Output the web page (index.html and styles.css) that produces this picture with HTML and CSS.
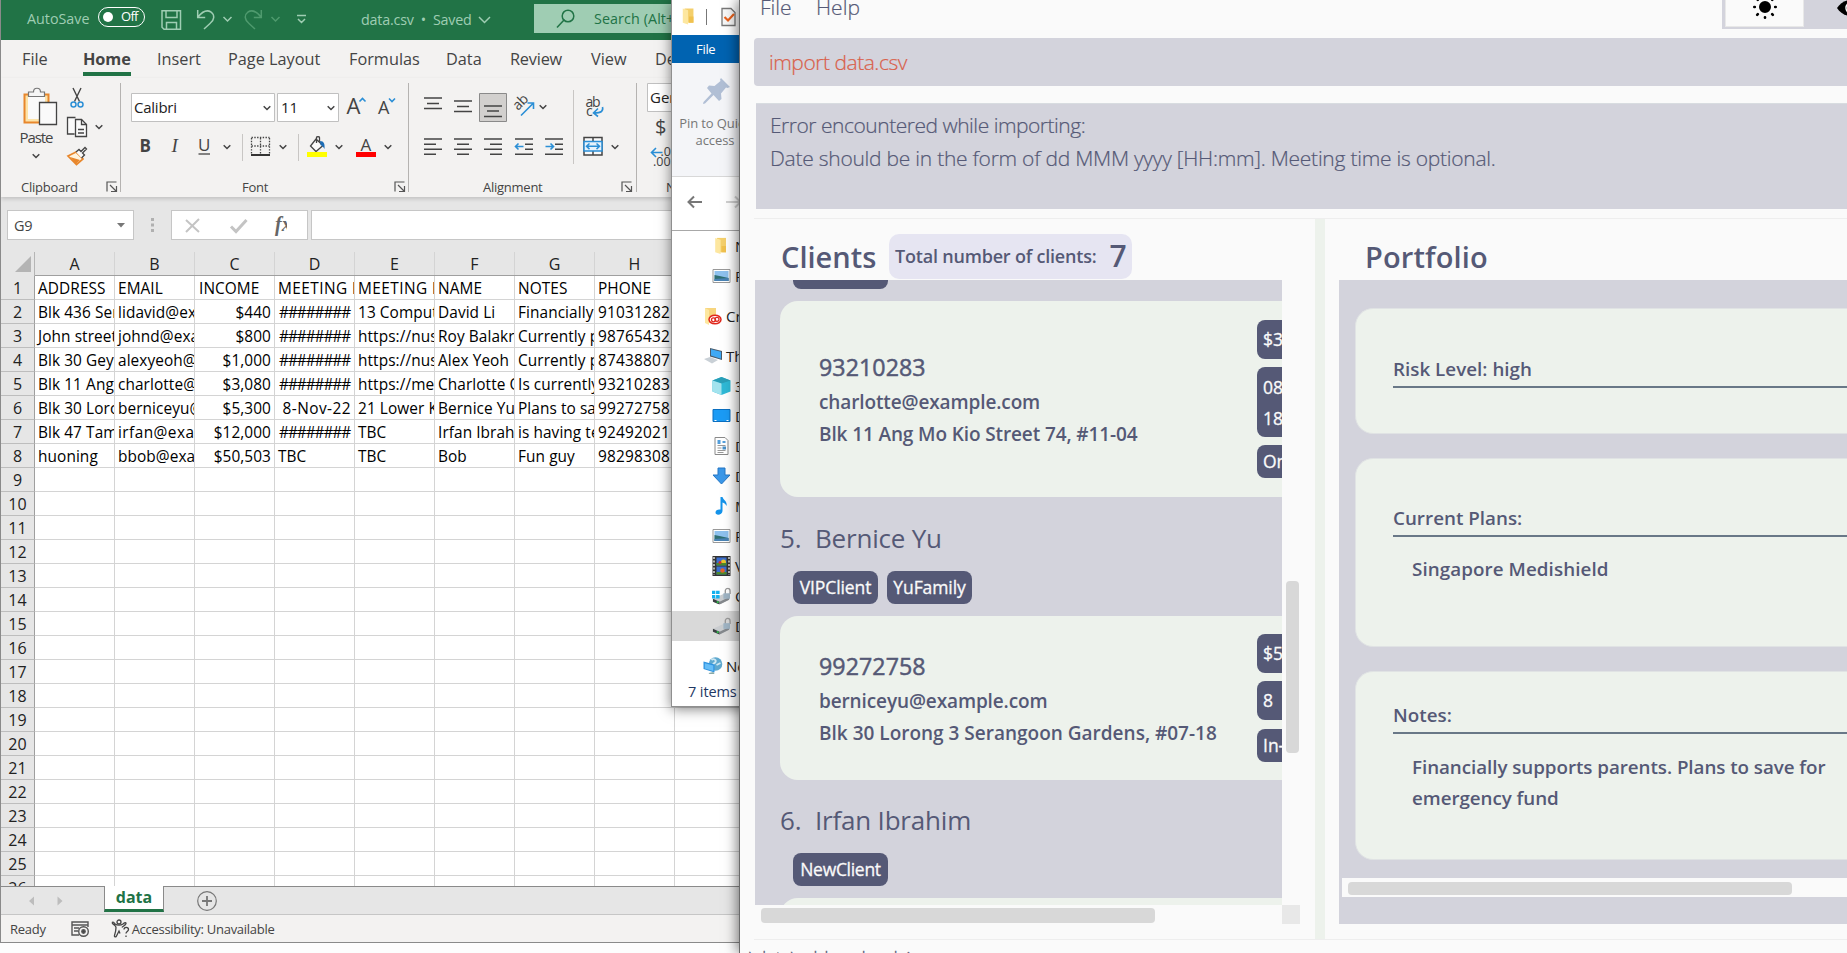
FILE: index.html
```
<!DOCTYPE html>
<html lang="en">
<head>
<meta charset="utf-8">
<title>Desktop</title>
<link rel="stylesheet" href="styles.css">
</head>
<body>
<svg width="0" height="0" class="defs">
  <symbol id="chev" viewBox="0 0 8 6" overflow="visible"><path d="M.7 1.2L4 4.5 7.3 1.2" fill="none" stroke="currentColor" stroke-width="1.5"/></symbol>
  <symbol id="launch" viewBox="0 0 12 12"><path d="M1 10.500V1h9.500M4 4l6 6M10.500 5v5.500H5" fill="none" stroke="#555" stroke-width="1.200"/></symbol>
  <symbol id="folder" viewBox="0 0 18 20"><path d="M4 1h10v16H4z" fill="#f4cf6b"/><path d="M2 1l6 2v16l-6-2z" fill="#fde7a0"/><path d="M9 10h5v7H9z" fill="#f0c14e"/></symbol>
  <symbol id="photo" viewBox="0 0 18 14"><path d="M.5.500h17v13H.5z" fill="#fff" stroke="#999"/><path d="M2 2h14v10H2z" fill="#8ec1ee"/><path d="M2 6l5 1 9 2v3H2z" fill="#2f6f72"/><path d="M2 10l14-1v3H2z" fill="#4a83b5"/></symbol>
  <symbol id="drive" viewBox="0 0 20 18"><path d="M1 12l11-5 6 3v3l-10 5-7-3z" fill="#c9cccf"/><path d="M1 12l7 3v3l-7-3z" fill="#3b3f42"/><path d="M8 15l10-5v3L8 18z" fill="#85898d"/><rect x="5" y="14.500" width="2" height="2" fill="#2fc24b"/><path d="M14 7V3.500a2.500 2.500 0 0 1 5 0V7" fill="none" stroke="#999" stroke-width="1.400"/><path d="M12 6h7v6h-7z" fill="#9fb4c4"/></symbol>
</svg>
<main class="desktop">

<section class="excel">
  <header class="xl-title">
    <span class="autosave">AutoSave</span>
    <span class="toggle"><i></i>Off</span>
    <svg class="quick" width="150" height="40" viewBox="158 0 150 40" fill="none" stroke="#9fcdb3" stroke-width="1.500">
      <path d="M162 10.700h18.500v18.600H164l-2-2zM166 11v6.500h11V11M166.500 29v-6.500h10V29"/>
      <path d="M197.700 10v7.500h7.500M198 17c4-5 9-7.500 13-5 4 3 3.500 8-1 11.500l-6 5.500"/>
      <g stroke="#4f9a6e"><path d="M261.300 10v7.500h-7.500M261 17c-4-5-9-7.500-13-5-4 3-3.500 8 1 11.500l6 5.500"/><path d="M271.500 17l4 4 4-4"/></g>
      <path d="M223.500 17l4 4 4-4M297 15.500h9M298 19l3.500 3.500L305 19"/>
    </svg>
    <span class="doc">data.csv&nbsp; •&nbsp; Saved</span>
    <svg width="14" height="10" viewBox="0 0 14 10"><path d="M1 2l5.500 5.500L12 2" fill="none" stroke="#9fcdb3" stroke-width="1.500"/></svg>
    <div class="xl-search">
      <svg width="20" height="20" viewBox="0 0 20 20"><path d="M1 18.500l7.500-8" stroke="#217346" stroke-width="1.500"/><circle cx="12" cy="7" r="5.800" fill="none" stroke="#217346" stroke-width="1.500"/></svg>
      <span>Search (Alt+Q)</span>
    </div>
  </header>

  <nav class="xl-tabs">
    <span class="t1">File</span><span class="t2 on">Home</span><span class="t3">Insert</span><span class="t4">Page Layout</span><span class="t5">Formulas</span><span class="t6">Data</span><span class="t7">Review</span><span class="t8">View</span><span class="t9">Developer</span>
  </nav>

  <div class="ribbon">
    <div class="group g-clip">
      <svg width="120" height="96" viewBox="1 80 120 96" fill="none">
        <path d="M24.500 94.500h24v28h-24z" fill="#fde3a8" stroke="#e8872c" stroke-width="2"/><path d="M28 97h17v22H28z" fill="#fafafa"/>
        <path d="M28.500 96.500v-4.500h5c0-5 7-5 7 0h4v4.500z" fill="#f6f6f6" stroke="#777" stroke-width="1.200"/>
        <path d="M39.500 102.500h17v22h-17z" fill="#fafafa" stroke="#444" stroke-width="1.300"/>
        <text x="19.500" y="143" textLength="34">Paste</text>
        <use href="#chev" x="32" y="153" width="8" height="6"/>
        <path d="M73 88l6.500 13.500M81 88l-6.500 13.500" stroke="#444" stroke-width="1.400"/><g stroke="#2b8fd6" stroke-width="1.500"><circle cx="73.500" cy="104.500" r="2.500"/><circle cx="80.500" cy="104.500" r="2.500"/></g>
        <g stroke="#444" stroke-width="1.300"><path d="M74.500 134h-7v-16.500h8M75.500 119.500h6l5 5v12h-11z" fill="#fafafa"/><path d="M81.500 119.500v5h5M78 129.500h6M78 133h6"/></g>
        <use href="#chev" x="95" y="124" width="8" height="6"/>
        <path d="M68 156l8-4 7 7-6.500 5.500z" fill="#fff3dd" stroke="#e8872c" stroke-width="1.700"/><path d="M70 157l10 3-4 4z" fill="#e8872c"/><path d="M76 152l3-2.500 2 2 4-4 1.500 1.500-4 4 2 2-3 3" fill="#fafafa" stroke="#444" stroke-width="1.300"/>
      </svg>
      <footer>Clipboard<svg width="12" height="12"><use href="#launch"/></svg></footer>
    </div>
    <div class="group g-font">
      <svg width="287" height="96" viewBox="121 80 287 96" fill="none">
        <path d="M131.500 93.500h143v28h-143zM277.500 93.500h61v28h-61z" fill="#fff" stroke="#c0c0c0"/>
        <text x="134" y="113" textLength="43" class="dark">Calibri</text><text x="281" y="113" class="dark">11</text>
        <use href="#chev" x="263" y="105" width="8" height="6"/><use href="#chev" x="327" y="105" width="8" height="6"/>
        <text x="346.500" y="113.500" font-size="22">A</text><path d="M359.500 101.500l3-3 3 3" stroke="#2b8fd6" stroke-width="1.600"/>
        <text x="378" y="113.500" font-size="18">A</text><path d="M389 98.500l3 3 3-3" stroke="#2b8fd6" stroke-width="1.600"/>
        <text x="139.500" y="152" font-size="17" font-weight="700">B</text>
        <text x="171.500" y="152" class="serif">I</text>
        <text x="198" y="151" font-size="17">U</text><path d="M198.500 154h11.500" stroke="#444" stroke-width="1.300"/>
        <use href="#chev" x="223" y="144" width="8" height="6"/>
        <path d="M242.500 134v27M298.500 134v27" stroke="#c8c6c4"/>
        <path d="M251.500 137.500h18M251.500 146h18M251.500 138v16M260.500 138v16M269.500 138v16" stroke="#444" stroke-width="1.300" stroke-dasharray="1.400 1.400"/><path d="M251 155h19" stroke="#333" stroke-width="2"/>
        <use href="#chev" x="279" y="144" width="8" height="6"/>
        <path d="M316 139l7 6.500-7 6-5.500-5.500zM316.500 143v-5.500c0-1 3-1 3 0v4" fill="#fafafa" stroke="#444" stroke-width="1.300"/><path d="M320 141c4 0 5 3 4.500 8-1-2-2-3-4-4z" fill="#1b6cb5"/>
        <path d="M307 152h20v5h-20z" fill="#ff0"/><use href="#chev" x="335" y="144" width="8" height="6"/>
        <text x="360.500" y="151" font-size="17">A</text><path d="M356 152h20v5h-20z" fill="red"/><use href="#chev" x="384" y="144" width="8" height="6"/>
      </svg>
      <footer>Font<svg width="12" height="12"><use href="#launch"/></svg></footer>
    </div>
    <div class="group g-align">
      <svg width="228" height="96" viewBox="409 80 228 96" fill="none">
        <path d="M479.500 93.500h27v28h-27z" fill="#d2d0ce" stroke="#8a8a8a"/>
        <g stroke="#444" stroke-width="1.400">
          <path d="M424 98h18M427 103.500h12M424 108.500h18M454 101h18M457 106.500h12M454 111.500h18M484 106h18M487 111h12M484 116.500h18"/>
          <path d="M424 139h18M424 144.300h12M424 149.300h18M424 154.300h12M454 139h18M457 144.300h12M454 149.300h18M457 154.300h12M484 139h18M490 144.300h12M484 149.300h18M490 154.300h12"/>
          <path d="M515 139h18M525 144.300h8M525 149.300h8M515 154.300h18M545 139h18M555 144.300h8M555 149.300h8M545 154.300h18"/>
        </g>
        <text transform="translate(518 111) rotate(-45)" font-size="14" textLength="16">ab</text>
        <path d="M521 115.500l12.500-12.500M527.500 103h6v6" stroke="#2b8fd6" stroke-width="1.600"/>
        <use href="#chev" x="539" y="104" width="8" height="6"/>
        <path d="M573.500 90v74" stroke="#c8c6c4"/>
        <text x="585.500" y="107" font-size="14" textLength="15">ab</text><text x="586" y="116" font-size="14">c</text>
        <path d="M602.500 107c1 4-1 6-8.500 6M598 108.500l-4.500 4.500 4.500 3.500" stroke="#2b8fd6" stroke-width="1.600"/>
        <g stroke="#2b8fd6" stroke-width="1.600"><path d="M515.500 146.500h8M518.500 143.500l-3 3 3 3M545.500 146.500h8M550.500 143.500l3 3-3 3"/></g>
        <path d="M584 137.500h18v17.500h-18zM593 138v17" stroke="#444" stroke-width="1.500" fill="#fafafa"/><path d="M584 141.500h18v9.500h-18z" fill="#e6f2fb" stroke="#2b8fd6" stroke-width="1.500"/><path d="M587 146.300h12M589.500 143.500l-3 2.800 3 2.800M596.500 143.500l3 2.800-3 2.800" stroke="#2b8fd6" stroke-width="1.500"/>
        <use href="#chev" x="611" y="144" width="8" height="6"/>
      </svg>
      <footer>Alignment<svg width="12" height="12"><use href="#launch"/></svg></footer>
    </div>
    <div class="group g-num">
      <svg width="103" height="96" viewBox="637 80 103 96" fill="none">
        <path d="M647.500 83.500h90v28h-90z" fill="#fff" stroke="#c0c0c0"/><text x="650" y="103" class="dark">General</text>
        <text x="655" y="134" font-size="20">$</text>
        <path d="M651.500 152.500h11M656 148l-4.500 4.500 4.500 4.500" stroke="#2b8fd6" stroke-width="1.600"/>
        <text x="660.500" y="156" font-size="12.500">.0</text><text x="653" y="166" font-size="12.500">.00</text>
      </svg>
      <footer>Number</footer>
    </div>
  </div>

  <div class="fbar">
    <div class="namebox"><span>G9</span><svg width="8" height="5"><path d="M0 0h8L4 4.500z" fill="#777"/></svg></div>
    <svg class="dots" width="4" height="14"><path d="M0 0h3v3H0zM0 5.500h3v3H0zM0 11h3v3H0z" fill="#b0b0b0"/></svg>
    <div class="fx"><svg width="110" height="26" viewBox="0 0 110 26" fill="none"><path d="M9 8l13 12M22 7L9 20" stroke="#c4c4c4" stroke-width="2"/><path d="M54 14.500l5 5L69.500 8" stroke="#c4c4c4" stroke-width="3"/><text x="98" y="19" class="fxt">fx</text></svg></div>
    <div class="formula"></div>
  </div>

  <div class="sheet">
    <div class="row heads"><b><svg width="16" height="16"><path d="M16 0v16H0z" fill="#b4b4b4"/></svg></b><span>A</span><span>B</span><span>C</span><span>D</span><span>E</span><span>F</span><span>G</span><span>H</span><span></span></div>
    <div class="row"><b>1</b><span>ADDRESS</span><span>EMAIL</span><span>INCOME</span><span class="m">MEETING DATE</span><span class="m">MEETING LOCATION</span><span>NAME</span><span>NOTES</span><span>PHONE</span></div>
    <div class="row"><b>2</b><span>Blk 436 Serangoon</span><span>lidavid@example</span><span class="r">$440</span><span class="h">########</span><span>13 Computing</span><span>David Li</span><span>Financially</span><span class="d">91031282</span></div>
    <div class="row"><b>3</b><span>John street</span><span>johnd@example</span><span class="r">$800</span><span class="h">########</span><span>https://nus</span><span>Roy Balakrishnan</span><span>Currently paying</span><span class="d">98765432</span></div>
    <div class="row"><b>4</b><span>Blk 30 Geylang</span><span>alexyeoh@example</span><span class="r">$1,000</span><span class="h">########</span><span>https://nus</span><span>Alex Yeoh</span><span>Currently paying</span><span class="d">87438807</span></div>
    <div class="row"><b>5</b><span>Blk 11 Ang Mo</span><span>charlotte@example</span><span class="r">$3,080</span><span class="h">########</span><span>https://meet</span><span>Charlotte Oliveiro</span><span>Is currently</span><span class="d">93210283</span></div>
    <div class="row"><b>6</b><span>Blk 30 Lorong</span><span>berniceyu@example</span><span class="r">$5,300</span><span class="r m">8-Nov-22</span><span>21 Lower Kent</span><span>Bernice Yu</span><span>Plans to save</span><span class="d">99272758</span></div>
    <div class="row"><b>7</b><span>Blk 47 Tampines</span><span class="m">irfan@example</span><span class="r">$12,000</span><span class="h">########</span><span>TBC</span><span>Irfan Ibrahim</span><span>is having tea</span><span class="d">92492021</span></div>
    <div class="row"><b>8</b><span>huoning</span><span>bbob@example</span><span class="r">$50,503</span><span>TBC</span><span>TBC</span><span>Bob</span><span>Fun guy</span><span class="d">98298308</span></div>
    <div class="row"><b>9</b></div><div class="row"><b>10</b></div><div class="row"><b>11</b></div><div class="row"><b>12</b></div><div class="row"><b>13</b></div><div class="row"><b>14</b></div><div class="row"><b>15</b></div><div class="row"><b>16</b></div><div class="row"><b>17</b></div><div class="row"><b>18</b></div><div class="row"><b>19</b></div><div class="row"><b>20</b></div><div class="row"><b>21</b></div><div class="row"><b>22</b></div><div class="row"><b>23</b></div><div class="row"><b>24</b></div><div class="row"><b>25</b></div><div class="row"><b>26</b></div>
  </div>

  <div class="sheettabs">
    <svg width="36" height="12"><path d="M6 1.500v9L1 6zM29.500 1.500v9l5-4.500z" fill="#bdbdbd"/></svg>
    <span class="stab">data</span>
    <svg class="plus" width="20" height="20" viewBox="0 0 20 20" fill="none" stroke="#777"><circle cx="10" cy="10" r="9.300" stroke-width="1.200"/><path d="M10 5v10M5 10h10" stroke-width="1.800"/></svg>
  </div>
  <footer class="xl-status">
    <span>Ready</span>
    <svg class="macro" width="19" height="16" viewBox="0 0 19 16" fill="none" stroke="#555" stroke-width="1.400"><path d="M8 14H1V1h16v5M1 4h16M3 7h5M3 10h4"/><circle cx="12.500" cy="10.500" r="4.800" fill="#f3f2f1"/><circle cx="12.500" cy="10.500" r="1.700" fill="#444"/></svg>
    <svg class="acc" width="19" height="19" viewBox="0 0 19 19" fill="none" stroke="#444" stroke-width="1.300"><circle cx="8" cy="3" r="2"/><path d="M1 3.500c1-1 2 0 3 1.500 2 1.500 6 1.500 8 0 1.500-1.500 3-2 3-.5-.5 2-3.500 3-4 4M1 3.500C2 6 5 6.500 5 8.500S4 15 3.500 16.500s1.500 2 2 .5L8 12l1 2.500M13 10.500c0-3 4.500-2.500 4.500 0 0 2-2.500 2-2.500 4M15 16.500v1.500"/></svg>
    <span class="acct">Accessibility: Unavailable</span>
  </footer>
</section>

<section class="explorer">
  <div class="ex-title">
    <svg width="70" height="35" viewBox="0 0 70 35"><use href="#folder" x="9" y="7" width="16" height="19"/><path d="M34.500 9v16" stroke="#777"/><path d="M50 8.500h9l4 4v13H50z" fill="#f8f8f8" stroke="#777" stroke-width="1.300"/><path d="M52.500 17l3.500 3.500L62 14" fill="none" stroke="#e8601c" stroke-width="2.200"/></svg>
  </div>
  <div class="ex-file">File</div>
  <div class="ex-ribbon">
    <svg width="28" height="27" viewBox="0 0 28 27"><path d="M18 0l9 9-2.500 1-1.500-.5-5 6 .5 5.500-2.500 2-5.500-6L2 25.500l-2 .5.500-2 8-8.500L4 10l2-2.500 5.500.5 6-5-.5-1.500z" fill="#b1bfd5"/></svg>
    <p>Pin to Quick<br>access</p>
  </div>
  <div class="ex-nav"><svg width="60" height="14" viewBox="0 0 60 14" fill="none" stroke-width="2"><path d="M16 7H2.500M8 1.500L2.500 7 8 12.500" stroke="#777"/><path d="M40 7h14M49 1.500L54.500 7 49 12.500" stroke="#d0d0d0"/></svg></div>
  <ul class="tree">
    <li class="sub"><svg width="18" height="18"><use href="#folder"/></svg>New</li>
    <li class="sub"><svg width="18" height="14"><use href="#photo"/></svg>Pictures</li>
    <li class="top"><svg width="18" height="18" viewBox="0 0 18 18"><path d="M1 1h11v15H1z" fill="#f7d57e"/><path d="M1 1l4 2v15l-4-2z" fill="#fde7a0"/><ellipse cx="11" cy="12.500" rx="6" ry="4.300" fill="#fff" stroke="#e0271c" stroke-width="1.500"/><circle cx="9.500" cy="12.800" r="2" fill="none" stroke="#e0271c" stroke-width="1.300"/><circle cx="13" cy="12.300" r="2" fill="none" stroke="#e0271c" stroke-width="1.300"/></svg>Creative</li>
    <li class="top"><svg width="20" height="18" viewBox="0 0 20 18"><path d="M7 1l12 3v9L7 9.500z" fill="#4a5b6b"/><path d="M8 2.300l10 2.500v7L8 8.500z" fill="#3fa9f5"/><path d="M1 12l6-2 8 3-6 3.500z" fill="#c9d0d6"/></svg>This PC</li>
    <li class="sub"><svg width="18" height="18" viewBox="0 0 18 18"><path d="M9 0l9 3.500v11L9 18 0 14.500v-11z" fill="#2fb9d6"/><path d="M9 0l9 3.500L9 6.500 0 3.500z" fill="#2a9fb8"/><path d="M0 3.500l9 3V18l-9-3.500z" fill="#a3e3ee"/></svg>3D Objects</li>
    <li class="sub"><svg width="18" height="14" viewBox="0 0 18 14"><path d="M.5.500h17v12H.5z" fill="#1b9bf5" stroke="#0b6fc0"/><path d="M2 11.500h2M14 11.500h2" stroke="#fff"/></svg>Desktop</li>
    <li class="sub"><svg width="18" height="18" viewBox="0 0 18 18"><path d="M2.500.500h10l3 3v14h-13z" fill="#fff" stroke="#8a8a8a"/><path d="M5 6h3M5 4h3M10 5h3" stroke="#1b7fd0" stroke-width="1.500"/><path d="M5 8.500h8M5 11h4M5 13.500h8M5 15.500h6" stroke="#999"/><path d="M10 9.500h3.500v3H10z" fill="#4a90c8"/></svg>Documents</li>
    <li class="sub"><svg width="18" height="18" viewBox="0 0 18 18"><path d="M5.500 1h7v7h5L9 17 .5 8h5z" fill="#3a97e8" stroke="#2476c4"/></svg>Downloads</li>
    <li class="sub"><svg width="18" height="18" viewBox="0 0 18 18"><path d="M8 0h2c1 3.500 5 4 4 9-.8-2-2-3-4-3.500V14c0 4-7 5-7 1.500 0-2.500 2.500-3.500 5-3z" fill="#1493ea"/></svg>Music</li>
    <li class="sub"><svg width="18" height="14"><use href="#photo"/></svg>Pictures</li>
    <li class="sub"><svg width="18" height="20" viewBox="0 0 18 20"><path d="M0 0h18v20H0z" fill="#333"/><path d="M1.500 1v18M16.500 1v18" stroke="#ddd" stroke-width="1.500" stroke-dasharray="2 1.500"/><path d="M4 1.500h10v8H4zM4 10.500h10v8H4z" fill="#3b6fd0"/><circle cx="11" cy="6" r="2.500" fill="#e8c62c"/><path d="M4 7h10v2.500H4zM4 16h10v2.500H4z" fill="#4d8b2a"/><circle cx="7.500" cy="6.500" r="1.500" fill="#d0342c"/><circle cx="10" cy="14.500" r="2.300" fill="#e0632c"/></svg>Videos</li>
    <li class="sub"><svg width="20" height="18" viewBox="0 0 20 18"><use href="#drive"/><path d="M0 3.500h3.500V7H0zM4.300 3.500H8V7H4.300zM0 8h3.500v3.500H0zM4.300 8H8v3.500H4.300z" fill="#12b0ee"/></svg>OS (C:)</li>
    <li class="sub sel"><svg width="20" height="18"><use href="#drive"/></svg>Data (D:)</li>
    <li class="top"><svg width="19" height="18" viewBox="0 0 19 18"><circle cx="12" cy="7" r="6.800" fill="#5fa9cf"/><path d="M8 3c2-2 5 0 4 2s-3 1-2 3M13 8l4-2" stroke="#cfe8f2" stroke-width="1.800" fill="none"/><path d="M0 4.500l11 3v8L0 12z" fill="#2f93e0"/><path d="M1.300 6.200l8.500 2.300V14l-8.500-2.600z" fill="#65bdf7"/><path d="M5 16l5-1 1 2H6z" fill="#8aa"/></svg>Network</li>
  </ul>
  <div class="ex-status">7 items</div>
</section>

<section class="app">
  <header class="menu">
    <span class="m1">File</span><span>Help</span>
    <div class="modes">
      <div class="mode lit"><svg width="26" height="26" viewBox="-13 -13 26 26" stroke="#000" stroke-width="2.600" stroke-linecap="round"><circle r="5" stroke-width="2"/><path d="M0-10.200v-.5M0 10.300v.5M-10.200 0h-.5M10.200 0h.5M-7.200-7.200l-.6-.6M7.200-7.200l.6-.6M-7.200 7.200l-.6.6M7.200 7.200l.6.6"/></svg></div>
      <div class="mode"><svg width="30" height="20" viewBox="0 0 30 20"><path d="M0 10C7-1 23-1 30 10 23 21 7 21 0 10z"/><circle cx="15" cy="10" r="6" fill="none" stroke="#fff" stroke-width="1.500"/></svg></div>
    </div>
  </header>
  <div class="command">import data.csv</div>
  <div class="result"><span class="l1">Error encountered while importing:</span><br>Date should be in the form of dd MMM yyyy [HH:mm]. Meeting time is optional.</div>
  <div class="split">
    <div class="clients">
      <div class="chead"><h2>Clients</h2><div class="total"><span>Total number of clients:</span><b>7</b></div></div>
      <div class="listwrap">
        <div class="list">
          <div class="tag stub"></div>
          <div class="card first">
            <div class="who"><strong>93210283</strong><span>charlotte@example.com</span><span>Blk 11 Ang Mo Kio Street 74, #11-04</span></div>
            <div class="badges"><i>$3,080</i><i class="two">08 Nov<br>18:00</i><i class="low">Online</i></div>
          </div>
          <h3><em>5.</em>Bernice Yu</h3>
          <div class="tags"><span class="tag">VIPClient</span><span class="tag">YuFamily</span></div>
          <div class="card second">
            <div class="who"><strong>99272758</strong><span>berniceyu@example.com</span><span class="wide">Blk 30 Lorong 3 Serangoon Gardens, #07-18</span></div>
            <div class="badges"><i>$5,300</i><i>8 &nbsp;Nov</i><i class="low">In-person</i></div>
          </div>
          <h3><em>6.</em>Irfan Ibrahim</h3>
          <div class="tags"><span class="tag w">NewClient</span></div>
          <div class="card third"></div>
        </div>
        <div class="vbar"><i></i></div>
      </div>
      <div class="hbar"><i></i><b></b></div>
    </div>
    <div class="divider"></div>
    <div class="portfolio">
      <h2>Portfolio</h2>
      <div class="panel">
        <div class="pcard p1"><h4>Risk Level: high</h4></div>
        <div class="pcard p2"><h4>Current Plans:</h4><p>Singapore Medishield</p></div>
        <div class="pcard p3"><h4>Notes:</h4><p>Financially supports parents. Plans to save for<br>emergency fund</p></div>
        <div class="phbar"><i></i></div>
      </div>
    </div>
  </div>
  <footer class="path">.\data\addressbook.json</footer>
</section>
</main>
</body>
</html>
```
FILE: styles.css
```
* { box-sizing: border-box; }
body { margin: 0; font-family: "Open Sans", "Noto Sans", sans-serif; color: #444; }
h2, h3, h4, p, ul { margin: 0; padding: 0; }
svg { display: block; flex: none; }
.defs { position: absolute; }
.desktop { position: relative; width: 1847px; height: 953px; overflow: hidden; background: #fdfdfd; }

/* spreadsheet window */
.excel { position: absolute; isolation: isolate; left: 0; top: 0; width: 760px; height: 943px; border-left: 1px solid #8a8a8a; border-bottom: 1px solid #8a8a8a; background: #e6e6e6; display: flex; flex-direction: column; overflow: hidden; white-space: nowrap; }
.xl-title { height: 40px; flex: none; background: #217346; color: #9fcdb3; font-size: 14.300px; display: flex; align-items: center; }
.xl-title > * { flex: none; }
.autosave { margin: -4px 0 0 26px; width: 71px; }
.toggle { width: 47px; height: 20px; margin-top: -6px; border: 1.500px solid #fff; border-radius: 10px; color: #fff; font-size: 13px; line-height: 17px; padding-left: 22px; position: relative; letter-spacing: -.7px; }
.toggle i { position: absolute; left: 4px; top: 4px; width: 10px; height: 10px; border-radius: 50%; background: #fff; }
.quick { margin-left: 13px; }
.doc { margin: -1px 0 0 53px; width: 116px; letter-spacing: -.2px; }
.xl-title > svg:nth-of-type(2) { margin-left: 1px; }
.xl-search { margin: -3px 0 0 42px; width: 240px; height: 29px; background: #9fcdb3; color: #217346; display: flex; align-items: center; padding-left: 22px; letter-spacing: .1px; }
.xl-search span { margin-left: 18px; }
.xl-tabs { height: 38px; flex: none; background: #f3f2f1; font-size: 16.300px; line-height: 38px; display: flex; }
.xl-tabs span { height: 36px; }
.t1 { margin-left: 21px; width: 61px; }
.on { width: 48px; font-weight: 700; border-bottom: 4px solid #217346; letter-spacing: -.1px; }
.t3 { margin-left: 26px; width: 71px; }
.t4 { width: 121px; } .t5 { width: 97px; } .t6 { width: 64px; } .t7 { width: 81px; } .t8 { width: 64px; }
.t7 { letter-spacing: -.2px; }
.ribbon { height: 119px; flex: none; background: #f3f2f1; display: flex; padding-top: 2px; box-shadow: 0 2px 4px rgba(0,0,0,.16); z-index: 1; }
.ribbon svg { font-size: 15px; }
.ribbon text { fill: #444; }
.ribbon .dark { fill: #222; }
.ribbon .serif { font: italic 19px "Liberation Serif", serif; }
.group { position: relative; flex: none; }
.group::after { content: ""; position: absolute; right: 0; top: 3px; height: 109px; width: 1px; background: #b5b3b1; }
.group footer { display: flex; align-items: center; justify-content: space-between; height: 21px; font-size: 13px; letter-spacing: -.25px; }
.g-clip { width: 120px; } .g-clip footer { padding: 0 3px 0 20px; }
.g-font { width: 288px; } .g-font footer { padding: 0 3px 0 121px; }
.g-align { width: 228px; } .g-align footer { padding: 0 4px 0 74px; }
.g-num footer { padding-left: 29px; }
.fbar { height: 55px; flex: none; display: flex; padding-top: 13px; }
.fbar > div { height: 30px; background: #fff; border: 1px solid #c6c6c6; }
.namebox { margin-left: 6px; width: 127px; display: flex; align-items: center; justify-content: space-between; padding: 0 8px 0 6px; font-size: 14.500px; letter-spacing: -.3px; }
.dots { margin: 8px 16px 0 17px; }
.fx { width: 137px; padding: 1px 0 0 5px; }
.fxt { font: italic 700 20px "Liberation Serif", serif; fill: #666; }
.formula { flex: 1; margin-left: 3px; }
.sheet { height: 634px; flex: none; overflow: hidden; background: #fff; color: #000; font-size: 15.400px; }
.row { display: flex; height: 24px; padding-left: 34px; position: relative; border-bottom: 1px solid #d4d4d4; line-height: 25.500px; letter-spacing: .08px; background: repeating-linear-gradient(90deg, transparent 0 79px, #d4d4d4 79px 80px) 34px 0 no-repeat; }
.row b { flex: none; width: 34px; margin-left: -34px; height: 24px; background: #e6e6e6; border-right: 1px solid #9f9f9f; border-bottom: 1px solid #bdbdbd; text-align: center; font-weight: 400; font-size: 16px; line-height: 25px; color: #222; overflow: hidden; }
.row span { width: 79px; margin-right: 1px; padding: 0 0 0 3px; overflow: hidden; flex: none; }
.row .r { text-align: right; padding-right: 3px; }
.row .h { letter-spacing: -1.050px; padding-left: 4px; }
.row .m { letter-spacing: .45px; }
.row .d { letter-spacing: .2px; }
.row span:nth-child(4):not(.r) { padding-left: 4px; }
.heads { background-color: #e6e6e6; border-bottom-color: #9f9f9f; line-height: 24px; }
.heads b { padding: 4px 0 0 14px; border-bottom: 0; border-right-color: #b5b5b5; }
.heads span { text-align: center; color: #222; font-size: 16px; padding: 0 !important; }
.sheettabs { height: 29px; flex: none; border-top: 1px solid #8a8a8a; border-bottom: 1px solid #c6c6c6; display: flex; align-items: center; padding-left: 27px; }
.stab { align-self: flex-start; width: 60px; height: 26px; margin: -1px 0 0 40px; background: #fff; border: 1px solid #8a8a8a; border-top: 0; border-bottom: 3px solid #217346; color: #217346; font-weight: 700; font-size: 16px; line-height: 22px; text-align: center; }
.plus { margin-left: 33px; }
.xl-status { flex: 1; background: #f3f2f1; display: flex; align-items: center; padding-left: 9px; font-size: 13px; letter-spacing: -.28px; }
.macro { margin-left: 25px; } .acc { margin-left: 21px; } .acct { margin-left: 2px; }

/* file browser window */
.explorer { position: absolute; left: 671px; top: 0; width: 100px; height: 707px; background: #fff; border-left: 1px solid #8f8f8f; border-bottom: 1px solid #8f8f8f; box-shadow: 0 2px 12px rgba(0,0,0,.5); display: flex; flex-direction: column; white-space: nowrap; }
.ex-title { height: 35px; }
.ex-file { height: 28px; background: #0063b1; color: #fff; font-size: 13px; line-height: 28px; padding-left: 24px; letter-spacing: -.3px; }
.ex-ribbon { height: 114px; background: #f4f5f8; border-bottom: 1px solid #d8d8d8; color: #777; font-size: 13px; line-height: 17px; padding-top: 15px; }
.ex-ribbon svg { margin: 0 0 10px 31px; }
.ex-ribbon p { width: 86px; text-align: center; letter-spacing: -.1px; }
.ex-nav { height: 54px; border-bottom: 1px solid #a8a8a8; padding: 18px 0 0 14px; }
.tree { list-style: none; height: 450px; color: #222; font-size: 15px; }
.tree li { display: flex; align-items: center; height: 30px; }
.tree .sub svg { margin: 0 4px 0 40px; width: 19px; }
.tree .top { margin: 10px 0 0; }
.tree .top svg { margin: 0 3px 0 31px; width: 20px; }
.tree .sel { background: #d9d9d9; }
.ex-status { color: #1f3864; font-size: 14.500px; padding-left: 16px; line-height: 21px; letter-spacing: -.1px; }

/* address book window */
.app { position: absolute; left: 739px; top: 0; width: 1108px; height: 953px; border-left: 1px solid #6a6a6a; background: #fafafa; color: #555976; box-shadow: -2px 0 12px rgba(0,0,0,.5); overflow: hidden; display: flex; flex-direction: column; }
.menu { height: 38px; flex: none; display: flex; font-size: 21px; font-weight: 300; line-height: 15px; padding-left: 20px; -webkit-text-stroke: .2px; }
.m1 { width: 56px; }
.modes { margin-left: auto; width: 125px; height: 29px; background: #d3d3dc; display: flex; padding: 0 0 2px 3px; flex: none; overflow: hidden; }
.mode { width: 79px; flex: none; display: flex; padding: 0 0 0 33px; }
.mode svg { margin-top: -2px; }
.lit { background: #fafafa; border: 1px solid #e8e8e8; border-top: 0; padding-left: 26px; }
.lit svg { margin-top: -6px; }
.command { margin-left: 14px; height: 48px; flex: none; border-radius: 4px 0 0 4px; background: #d3d3dc; color: #d9604a; font-size: 21px; font-weight: 300; line-height: 48px; padding-left: 15px; letter-spacing: -.47px; -webkit-text-stroke: .2px; }
.result { margin: 17px 0 0 16px; height: 106px; flex: none; background: #d3d3dc; border-top: 1px solid #d8dce0; padding: 5px 0 0 14px; font-size: 21px; font-weight: 300; line-height: 33px; letter-spacing: -.25px; white-space: nowrap; -webkit-text-stroke: .2px; }
.l1 { letter-spacing: -.48px; }
.split { display: flex; margin: 9px 0 0 14px; height: 722px; flex: none; border-top: 1px solid #eee; border-bottom: 1px solid #eee; }
.clients { width: 561px; flex: none; }
.chead { display: flex; height: 61px; padding: 15px 0 0 27px; }
h2 { font-size: 29px; font-weight: 600; line-height: 46px; letter-spacing: 0; }
.chead h2 { width: 108px; }
.total { display: flex; width: 243px; height: 45px; border-radius: 10px; background: #e6e5f2; font-size: 18px; font-weight: 600; line-height: 44px; padding-left: 6px; letter-spacing: -.2px; }
.total b { margin-left: 13px; font-size: 30px; font-weight: 600; }
.listwrap { display: flex; height: 625px; margin-left: 1px; }
.list { width: 527px; height: 625px; overflow: hidden; background: #d3d3dc; padding-left: 25px; flex: none; }
.tag { display: block; height: 33px; width: 85px; border-radius: 8px; background: #555976; color: #fafafa; font-size: 17.500px; line-height: 32px; text-align: center; -webkit-text-stroke: .3px; letter-spacing: -.1px; }
.tag.w { width: 95px; letter-spacing: -.3px; }
.stub { width: 95px; margin: -24px 0 0 13px; }
.card { display: flex; background: #edf2ec; border-radius: 18px 0 0 18px; width: 520px; }
.first { height: 196px; margin-top: 12px; padding-top: 19px; }
.who { width: 477px; padding: 32px 0 0 39px; flex: none; display: flex; flex-direction: column; font-size: 19px; font-weight: 600; line-height: 32px; letter-spacing: -.12px; white-space: nowrap; }
.who strong { font-size: 23.200px; font-weight: 400; line-height: 31px; letter-spacing: .08px; -webkit-text-stroke: .5px; margin-bottom: 3px; }
.who .wide { letter-spacing: 0; }
.badges { display: flex; flex-direction: column; gap: 8px; width: 120px; }
.badges i { height: 39px; border-radius: 8px; background: #555976; color: #fafafa; font-style: normal; font-size: 17.500px; line-height: 38px; padding-left: 6px; white-space: nowrap; -webkit-text-stroke: .3px; }
.badges .two { height: 70px; line-height: 31px; padding-top: 5px; }
.badges .low { height: 33px; line-height: 33px; }
.second .badges .low { margin-top: 1px; }
.list h3 { font-size: 26px; font-weight: 400; line-height: 40px; letter-spacing: -.2px; padding-top: 21px; height: 74px; display: flex; }
.list em { font-style: normal; width: 35px; }
.tags { display: flex; gap: 9px; padding-left: 13px; height: 45px; }
.second { height: 164px; padding-top: 18px; }
.second .who { padding-top: 17px; }
.second + h3 { height: 73px; padding-top: 20px; }
.third { height: 100px; }
.vbar { width: 18px; padding: 301px 0 0 4px; }
.vbar i { display: block; width: 13px; height: 172px; border-radius: 4px; background: #d8d8d8; }
.hbar { display: flex; height: 19px; margin-left: 1px; padding-left: 6px; }
.hbar i { width: 394px; height: 15px; margin-top: 3px; border-radius: 4px; background: #d8d8d8; }
.hbar b { margin-left: 127px; width: 18px; background: #e8e8e8; }
.divider { width: 10px; flex: none; background: #edf2ec; }
.portfolio { flex: 1; padding-left: 14px; min-width: 0; }
.portfolio h2 { height: 61px; padding: 15px 0 0 26px; letter-spacing: .15px; }
.panel { height: 644px; background: #d3d3dc; padding: 28px 0 0 16px; overflow: hidden; }
.pcard { width: 540px; border: 1px solid #e0e3e4; border-radius: 18px; background: #edf2ec; padding-left: 37px; font-size: 18.800px; font-weight: 600; white-space: nowrap; letter-spacing: -.05px; }
.pcard h4 { font-size: 18.800px; font-weight: 600; line-height: 34px; height: 36px; border-bottom: 2px solid #697887; letter-spacing: .02px; }
.pcard p { padding: 17px 0 0 19px; line-height: 31px; }
.p1 { height: 126px; padding-top: 43px; }
.p2 { height: 189px; margin-top: 24px; padding-top: 42px; }
.p3 { height: 189px; margin-top: 24px; padding-top: 26px; }
.p2 p { letter-spacing: .08px; }
.p3 p { padding-top: 18px; }
.phbar { height: 19px; margin: 18px 0 0 -13px; background: #fafafa; padding: 4px 0 0 6px; }
.phbar i { display: block; width: 444px; height: 13px; border-radius: 4px; background: #d8d8d8; }
.path { font-size: 19px; font-weight: 300; line-height: 24px; padding: 6px 0 0 5px; height: 13px; overflow: hidden; white-space: nowrap; letter-spacing: -.500px; color: #555976; -webkit-text-stroke: .3px; }
```
